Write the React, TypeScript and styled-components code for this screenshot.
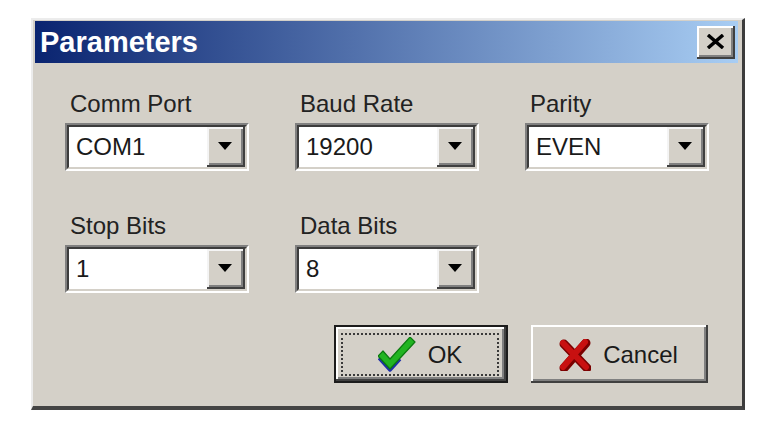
import React from 'react';
import styled, { createGlobalStyle } from 'styled-components';

const GlobalStyle = createGlobalStyle`
  html, body {
    margin: 0;
    padding: 0;
    background: #ffffff;
  }

  body {
    font-family: "Liberation Sans", Arial, sans-serif;
  }
`;

const Window = styled.div`
  box-sizing: border-box;
  width: 714px;
  height: 392px;
  margin: 18px 0 0 31px;
  background: #d4d0c8;
  border-style: solid;
  border-width: 2px 3px 4px 2px;
  border-color: #ececec #3c3c3c #444444 #ececec;
  padding: 1px 4px 0 2px;
  display: flex;
  flex-direction: column;
`;

const TitleBar = styled.div`
  flex: none;
  height: 42px;
  display: flex;
  align-items: center;
  justify-content: space-between;
  padding: 0 3px 0 5px;
  background: linear-gradient(to right, #0a2470, #a8cdf3);
`;

const Title = styled.span`
  font-size: 29px;
  font-weight: bold;
  color: #ffffff;
  line-height: 32px;
`;

const CloseButton = styled.div`
  width: 38px;
  height: 33px;
  box-sizing: border-box;
  background: #d4d0c8;
  box-shadow: inset -2px -2px 0 #404040, inset 2px 2px 0 #ffffff, inset -4px -4px 0 #808080;
  display: flex;
  align-items: center;
  justify-content: center;
  padding: 0 2px 2px 0;
`;

const Body = styled.div`
  flex: 1;
  padding: 27px 30px 0 30px;
  display: flex;
  flex-direction: column;
`;

const FieldGrid = styled.div`
  display: grid;
  grid-template-columns: repeat(3, 184px);
  column-gap: 46px;
  row-gap: 41px;
`;

const Field = styled.div`
  display: flex;
  flex-direction: column;
  gap: 5px;
`;

const Label = styled.span`
  font-size: 24px;
  line-height: 28px;
  color: #222222;
  padding-left: 5px;
`;

const ComboFrame = styled.div`
  box-sizing: border-box;
  height: 48px;
  border: 2px solid;
  border-color: #808080 #ffffff #ffffff #808080;
  display: flex;
`;

const ComboInner = styled.div`
  flex: 1;
  display: flex;
  border: 2px solid;
  border-color: #3c3c3c #d4d0c8 #d4d0c8 #3c3c3c;
  background: #ffffff;
`;

const ComboValue = styled.span`
  flex: 1;
  font-size: 24px;
  line-height: 40px;
  color: #1a1a1a;
  padding-left: 7px;
`;

const DropButton = styled.div`
  width: 36px;
  background: #d4d0c8;
  box-shadow: inset -2px -2px 0 #404040, inset 2px 2px 0 #f4f4f4, inset -4px -4px 0 #808080;
  display: flex;
  align-items: center;
  justify-content: center;
  padding: 0 2px 2px 0;
`;

const Arrow = styled.span`
  width: 0;
  height: 0;
  border-left: 7px solid transparent;
  border-right: 7px solid transparent;
  border-top: 8px solid #000000;
`;

const ButtonRow = styled.div`
  display: flex;
  justify-content: flex-end;
  gap: 23px;
  margin-top: 32px;
`;

const PushButton = styled.div<{ $default?: boolean }>`
  box-sizing: border-box;
  width: ${(p) => (p.$default ? '174px' : '177px')};
  height: 58px;
  background: #d4d0c8;
  border: ${(p) => (p.$default ? '2px solid #1c1c1c' : 'none')};
  box-shadow: inset -2px -2px 0 #404040, inset 2px 2px 0 #ffffff, inset -4px -4px 0 #808080;
  padding: ${(p) => (p.$default ? '6px 7px 5px 5px' : '8px 9px 7px 7px')};
  display: flex;
`;

const ButtonFace = styled.div<{ $focused?: boolean }>`
  flex: 1;
  display: flex;
  align-items: center;
  justify-content: center;
  gap: 12px;
  border: 2px dotted ${(p) => (p.$focused ? '#3a3a3a' : 'transparent')};
  font-size: 24px;
  color: #1a1a1a;
`;

const Combo = ({ value }: { value: string }) => (
  <ComboFrame>
    <ComboInner>
      <ComboValue>{value}</ComboValue>
      <DropButton>
        <Arrow />
      </DropButton>
    </ComboInner>
  </ComboFrame>
);

const CheckIcon = () => (
  <svg width="38" height="35" viewBox="0 0 38 35">
    <path d="M1 21 L12 33 L22 22" stroke="#1f2fa8" strokeWidth="3.5" fill="none" strokeLinejoin="round" />
    <path d="M0 19 L5 14 L12 22 L32 0 L37 5 L12 32 Z" fill="#22b422" stroke="#0c7a10" strokeWidth="1.2" strokeLinejoin="round" />
  </svg>
);

const CrossIcon = () => (
  <svg width="32" height="32" viewBox="0 0 32 32">
    <path d="M5 5 L28 29 M27 4 L5 29" stroke="#7a0000" strokeWidth="9" strokeLinecap="round" />
    <path d="M4 4 L27 28 M26 3 L4 28" stroke="#c81010" strokeWidth="6" strokeLinecap="round" />
  </svg>
);

const fields = [
  { label: 'Comm Port', value: 'COM1' },
  { label: 'Baud Rate', value: '19200' },
  { label: 'Parity', value: 'EVEN' },
  { label: 'Stop Bits', value: '1' },
  { label: 'Data Bits', value: '8' },
];

const App = () => (
  <>
    <GlobalStyle />
    <Window>
      <TitleBar>
        <Title>Parameters</Title>
        <CloseButton>
          <svg width="19" height="15" viewBox="0 0 19 15">
            <path d="M2 1 L17 14 M17 1 L2 14" stroke="#000000" strokeWidth="3.5" />
          </svg>
        </CloseButton>
      </TitleBar>
      <Body>
        <FieldGrid>
          {fields.map((f) => (
            <Field key={f.label}>
              <Label>{f.label}</Label>
              <Combo value={f.value} />
            </Field>
          ))}
        </FieldGrid>
        <ButtonRow>
          <PushButton $default>
            <ButtonFace $focused>
              <CheckIcon />
              <span>OK</span>
            </ButtonFace>
          </PushButton>
          <PushButton>
            <ButtonFace>
              <CrossIcon />
              <span>Cancel</span>
            </ButtonFace>
          </PushButton>
        </ButtonRow>
      </Body>
    </Window>
  </>
);

export default App;
